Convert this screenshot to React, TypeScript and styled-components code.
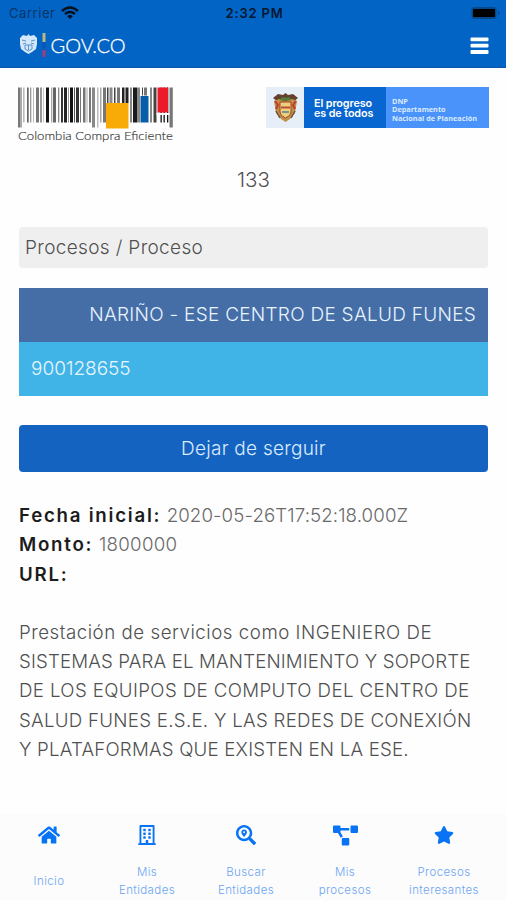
import React from "react";
import styled, { createGlobalStyle } from "styled-components";
import { FaHome, FaProjectDiagram, FaRegBuilding, FaSearchLocation, FaStar } from "react-icons/fa";

const GlobalStyle = createGlobalStyle`
  * { box-sizing: border-box; }
  body { margin: 0; background: #fefefe; }
`;

const Screen = styled.div`
  width: 506px;
  height: 900px;
  display: flex;
  flex-direction: column;
  overflow: hidden;
  background: #fefefe;
  color: #505050;
  font-family: Inter, "Liberation Sans", sans-serif;
  font-weight: 300;
`;

const Header = styled.header`
  height: 68px;
  flex: none;
  background: #0264c4;
  border-bottom: 1px solid #0a52aa;
`;

const StatusBar = styled.div`
  height: 26px;
  display: grid;
  grid-template-columns: 1fr auto 1fr;
  align-items: center;
  padding: 0 6px 0 9px;
  color: #06182f;
`;

const Carrier = styled.div`
  display: flex;
  align-items: center;
  gap: 6px;
  font-size: 13px;
  font-weight: 400;
  letter-spacing: 0.55px;
  color: #0a3566;
`;

const Clock = styled.div`
  font-size: 13px;
  font-weight: 600;
  letter-spacing: 0.8px;
`;

const Battery = styled.svg`
  justify-self: end;
`;

const NavBar = styled.div`
  height: 41px;
  display: flex;
  align-items: center;
  justify-content: space-between;
  padding: 0 17px 2px 18px;
  color: #fff;
`;

const Content = styled.main`
  flex: 1;
  padding: 17px 18px 0 19px;
`;

const Logos = styled.div`
  display: flex;
  justify-content: space-between;
  height: 60px;
  margin: 0 -1px 0 -1px;
`;

const Agency = styled.div`
  display: flex;
  width: 223px;
  height: 41px;
  margin-top: 2px;
  color: #fff;
`;

const Emblem = styled.div`
  width: 38px;
  display: flex;
  align-items: center;
  justify-content: center;
  background: #e6eef8;
`;

const Slogan = styled.div`
  width: 82px;
  padding: 12px 0 0 10px;
  background: #0766cf;
  font: 600 10.8px/10px Inter, sans-serif;
  letter-spacing: -0.1px;
  white-space: nowrap;
`;

const Department = styled.div`
  flex: 1;
  padding: 10px 0 0 6px;
  background: #4a93fa;
  color: #d9eaff;
  font: 700 7.3px/8.4px "Open Sans", sans-serif;
  white-space: nowrap;
`;

const Count = styled.h1`
  margin: 19px 0 0;
  height: 32px;
  font-size: 20.5px;
  font-weight: 300;
  line-height: 32px;
  text-align: center;
`;

const Breadcrumb = styled.nav`
  height: 41px;
  margin-top: 31px;
  padding-left: 6px;
  border-radius: 4px;
  background: #efefef;
  font-size: 19px;
  line-height: 41px;
  letter-spacing: 0.35px;
`;

const Entity = styled.section`
  margin-top: 20px;
  color: #e9f4ff;
  font-size: 19px;
`;

const EntityName = styled.div`
  height: 54px;
  padding-right: 12px;
  background: #456ea7;
  line-height: 54px;
  text-align: right;
  white-space: nowrap;
  letter-spacing: 0.27px;
`;

const EntityCode = styled.div`
  height: 54px;
  padding-left: 12px;
  background: #41b4e7;
  line-height: 53px;
`;

const FollowButton = styled.button`
  display: block;
  width: 100%;
  height: 47px;
  margin: 29px 0;
  padding: 0;
  border: 0;
  border-radius: 4px;
  background: #1563c1;
  color: #dcecff;
  font: 300 19px/46px Inter, sans-serif;
  letter-spacing: 0.25px;
`;

const Line = styled.div<{ $spacing: string }>`
  height: 29.3px;
  font-size: 18.7px;
  line-height: 29.3px;
  white-space: nowrap;
  letter-spacing: ${(p) => p.$spacing};
`;

const Field = styled(Line)`
  color: #6a6a6a;
`;

const Label = styled.strong`
  color: #1c1c1c;
  font-weight: 600;
  letter-spacing: 1.75px;
`;

const Description = styled.section`
  margin-top: 29px;
`;

const TabBar = styled.nav`
  height: 86px;
  display: grid;
  grid-template-columns: 98px 98px 100px 98px 100px;
  flex: none;
  background: #fcfcfc;
  color: #0873f5;
`;

const Tab = styled.div`
  display: grid;
  grid-template-rows: 42px 50px;
  justify-items: center;
  align-items: center;
`;

const TabLabel = styled.span`
  color: #6ba5f3;
  font-size: 11.5px;
  line-height: 18.5px;
  text-align: center;
  white-space: pre-line;
  letter-spacing: 0.4px;
`;

const fields = [
  { label: "Fecha inicial:", value: "2020-05-26T17:52:18.000Z", spacing: "0.1px" },
  { label: "Monto:", value: "1800000", spacing: "0.3px" },
  { label: "URL:", value: "", spacing: "0px" },
];

const description = [
  { text: "Prestación de servicios como INGENIERO DE", spacing: "0.53px" },
  { text: "SISTEMAS PARA EL MANTENIMIENTO Y SOPORTE", spacing: "0.15px" },
  { text: "DE LOS EQUIPOS DE COMPUTO DEL CENTRO DE", spacing: "0.38px" },
  { text: "SALUD FUNES E.S.E. Y LAS REDES DE CONEXIÓN", spacing: "0.28px" },
  { text: "Y PLATAFORMAS QUE EXISTEN EN LA ESE.", spacing: "0.2px" },
];

const tabs = [
  { icon: <FaHome size={22} />, label: "Inicio" },
  { icon: <FaRegBuilding size={20} />, label: "Mis\nEntidades" },
  { icon: <FaSearchLocation size={20} />, label: "Buscar\nEntidades" },
  { icon: <FaProjectDiagram size={25} />, label: "Mis\nprocesos" },
  { icon: <FaStar size={20} />, label: "Procesos\ninteresantes" },
];

// Each bar: x, width, colour, height.
const bars: [number, number, string, number][] = [
  [0, 2, "#777", 40], [2, 2, "#aaa", 40], [5, 1.6, "#bbb", 35], [9, 1.7, "#666", 35],
  [12, 1.3, "#999", 35], [15, 1, "#bbb", 35], [18, 3, "#777", 35], [22, 2, "#999", 35], [25, 1, "#ccc", 35],
  [28, 3, "#151515", 35], [33, 1.3, "#aaa", 35], [35, 3, "#666", 35], [40, 1.3, "#888", 35],
  [43, 2, "#333", 35], [46, 3, "#222", 35], [50, 1, "#999", 35], [52, 3, "#111", 35], [56, 1, "#555", 35],
  [58, 3, "#333", 35], [62, 1, "#777", 35], [65, 2.5, "#777", 35], [68.5, 1, "#aaa", 35],
  [71, 2, "#777", 35], [74, 3, "#888", 40], [79, 1.5, "#bbb", 40], [82, 1.5, "#aaa", 35],
  [85, 3, "#777", 35], [89, 1.5, "#444", 15.5], [91.5, 3, "#888", 15.5], [96, 1.5, "#444", 15.5],
  [99, 3, "#777", 15.5], [104, 2.5, "#222", 15.5], [107.500, 3, "#222", 15.5], [112, 2, "#888", 35],
  [115, 4.5, "#1b1b1b", 35], [120, 2, "#888", 35], [124, 1, "#444", 8], [126, 3, "#777", 8],
  [132, 2, "#888", 35], [135.500, 3, "#444", 35], [142.5, 1.3, "#111", 35],
  [145.5, 1.3, "#111", 35], [149, 1.3, "#111", 35], [151.5, 3.3, "#777", 40],
];

function WifiIcon() {
  return (
    <svg width="18" height="14" viewBox="0 0 18 14" fill="none" stroke="#06101f" strokeWidth="2.400">
      <path d="M1 5Q9-2 17 5" />
      <path d="M4 8Q9 3.800 14 8" />
      <path d="M9 13 6.200 10.200Q9 8 11.800 10.200Z" fill="#06101f" stroke="none" />
    </svg>
  );
}

function MenuIcon() {
  return (
    <svg width="19" height="18" viewBox="0 0 19 18" fill="#fff">
      <rect x="0.500" y="0.500" width="18" height="3.800" rx="1" />
      <rect x="0.500" y="6.800" width="18" height="3.800" rx="1" />
      <rect x="0.500" y="13.100" width="18" height="3.800" rx="1" />
    </svg>
  );
}

function GovLogo() {
  return (
    <svg width="110" height="28" viewBox="0 0 110 28">
      <path d="M2 6 5 3l4 1 1.500-2L12 4l4-1 3 3v6l-1 5-4 3-3.500 2L7 20l-4-3-1-5Z" fill="#d4e7fb" />
      <path d="M4 8l4 1m5 0 4-1M5 12l3-1m5 0 3 1M7 13h7v4l-3.500 2L7 17ZM10.500 13v5" fill="none" stroke="#4b88c8" strokeWidth="0.900" />
      <path d="M26 1v9" stroke="#bbb783" strokeWidth="3" />
      <path d="M26 10v8" stroke="#0b55b6" strokeWidth="3" />
      <path d="M26 18v7" stroke="#a43c79" strokeWidth="3" />
      <text x="32.500" y="20.500" textLength="75" lengthAdjust="spacingAndGlyphs" fill="#fff" stroke="#fff" strokeWidth="0.300" fontFamily="Lato, sans-serif" fontSize="20">GOV.CO</text>
    </svg>
  );
}

function BarcodeLogo() {
  return (
    <svg width="158" height="60" viewBox="0 0 158 60">
      {bars.map(([x, w, fill, h]) => (
        <rect key={x} x={x} y="2.500" width={w} height={h} fill={fill} />
      ))}
      <rect x="88" y="18" width="22.500" height="25.500" fill="#f8ab07" />
      <rect x="122.500" y="11" width="8" height="26.500" fill="#075da8" />
      <rect x="138.500" y="28" width="13" height="2" fill="#fefefe" />
      <rect x="139.500" y="2.500" width="10.500" height="25" fill="#eb1b2c" />
      <text x="0" y="54.500" textLength="155" lengthAdjust="spacingAndGlyphs" fill="#333" stroke="#333" strokeWidth="0.150" fontFamily="Lato, sans-serif" fontSize="12.500">Colombia Compra Eficiente</text>
    </svg>
  );
}

function CoatOfArms() {
  return (
    <svg width="27" height="31" viewBox="0 0 27 31">
      <path d="M1 6 6 2l5 1 2.500-2L16 3l5-1 5 4-5 4H6Z" fill="#65402f" />
      <path d="M2 9l5-2 6 2 7-2 5 2-2 12-5 6-4.500 3L9 27l-5-6Z" fill="#c09247" />
      <path d="M3 9l3 4-2 4M24 9l-3 4 2 4" stroke="#bc3c30" strokeWidth="2" fill="none" />
      <path d="M4 19l4 7M23 19l-4 7" stroke="#6d4d42" strokeWidth="1.500" />
      <path d="M8 10h11v10q0 4-5.500 6Q8 24 8 20Z" fill="#edd17a" stroke="#a63e2d" />
      <path d="M9 15.500h9" stroke="#b94d38" strokeWidth="2" />
      <path d="M10 20h7" stroke="#79948c" strokeWidth="2" />
      <path d="M9 7h9" stroke="#51803b" strokeWidth="3" />
    </svg>
  );
}

export default function App() {
  return (
    <>
      <GlobalStyle />
      <Screen>
        <Header>
          <StatusBar>
            <Carrier>Carrier <WifiIcon /></Carrier>
            <Clock>2:32 PM</Clock>
            <Battery width="29" height="14" viewBox="0 0 29 14">
              <rect x="0.500" y="1" width="25" height="12" rx="3" fill="#06488c" />
              <rect x="2" y="3" width="22" height="8" rx="1" fill="#000" />
              <path d="M27 4.500q3 2.500 0 5Z" fill="#06488c" />
            </Battery>
          </StatusBar>
          <NavBar>
            <GovLogo />
            <MenuIcon />
          </NavBar>
        </Header>
        <Content>
          <Logos>
            <BarcodeLogo />
            <Agency>
              <Emblem><CoatOfArms /></Emblem>
              <Slogan>El progreso<br />es de todos</Slogan>
              <Department>DNP<br />Departamento<br />Nacional de Planeación</Department>
            </Agency>
          </Logos>
          <Count>133</Count>
          <Breadcrumb>Procesos / Proceso</Breadcrumb>
          <Entity>
            <EntityName>NARIÑO - ESE CENTRO DE SALUD FUNES</EntityName>
            <EntityCode>900128655</EntityCode>
          </Entity>
          <FollowButton>Dejar de serguir</FollowButton>
          {fields.map((f) => (
            <Field key={f.label} $spacing={f.spacing}><Label>{f.label}</Label> {f.value}</Field>
          ))}
          <Description>
            {description.map((d) => (
              <Line key={d.text} $spacing={d.spacing}>{d.text}</Line>
            ))}
          </Description>
        </Content>
        <TabBar>
          {tabs.map((t) => (
            <Tab key={t.label}>{t.icon}<TabLabel>{t.label}</TabLabel></Tab>
          ))}
        </TabBar>
      </Screen>
    </>
  );
}
